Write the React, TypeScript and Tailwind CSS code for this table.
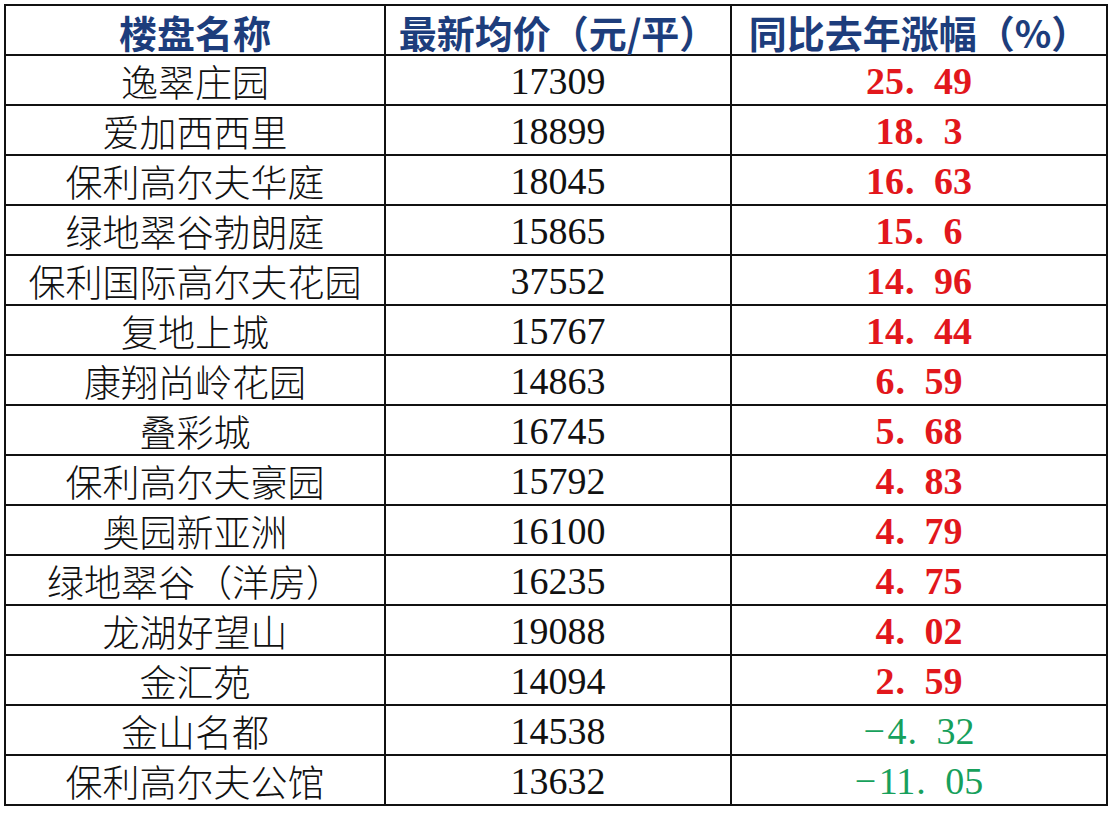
const rows: [string, string, string][] = [
  ['逸翠庄园', '17309', '25.49'],
  ['爱加西西里', '18899', '18.3'],
  ['保利高尔夫华庭', '18045', '16.63'],
  ['绿地翠谷勃朗庭', '15865', '15.6'],
  ['保利国际高尔夫花园', '37552', '14.96'],
  ['复地上城', '15767', '14.44'],
  ['康翔尚岭花园', '14863', '6.59'],
  ['叠彩城', '16745', '5.68'],
  ['保利高尔夫豪园', '15792', '4.83'],
  ['奥园新亚洲', '16100', '4.79'],
  ['绿地翠谷（洋房）', '16235', '4.75'],
  ['龙湖好望山', '19088', '4.02'],
  ['金汇苑', '14094', '2.59'],
  ['金山名都', '14538', '-4.32'],
  ['保利高尔夫公馆', '13632', '-11.05'],
]

const cjk = "font-['Noto_Sans_CJK_SC',sans-serif]"
const num = "font-['Liberation_Serif','Noto_Sans_CJK_SC',serif]"

function Rate({ value }: { value: string }) {
  const neg = value.startsWith('-')
  const [intPart, dec] = value.replace('-', '').split('.')
  return (
    <span
      className={`${num} text-[38px] leading-none whitespace-nowrap ${neg ? 'text-[#17a05c] font-normal' : 'text-[#e2171c] font-bold'}`}
    >
      {neg && <span className="inline-block w-[24px] text-left">−</span>}
      {intPart}
      <span className="inline-block w-[30px] pl-[1px] text-left">.</span>
      {dec}
    </span>
  )
}

export default function App() {
  return (
    <div className="w-[1114px] h-[814px] bg-white overflow-hidden pl-[4px] pt-[4px]">
      <div className="grid grid-cols-[380px_346px_376px] w-[1104px] border-l-2 border-t-2 border-[#111]">
        {['楼盘名称', '最新均价（元/平）', '同比去年涨幅（%）'].map((h) => (
          <div
            key={h}
            className={`h-[50px] border-r-2 border-b-2 border-[#111] flex items-center justify-center pt-[3px] ${cjk} text-[38px] font-bold text-[#1d3d7c] leading-none whitespace-nowrap`}
          >
            {h}
          </div>
        ))}
        {rows.map(([name, price, rate]) => (
          <div key={name} className="contents">
            <div
              className={`h-[50px] border-r-2 border-b-2 border-[#111] flex items-center justify-center pt-[2px] ${cjk} text-[37px] font-light text-[#111] leading-none whitespace-nowrap`}
            >
              {name}
            </div>
            <div
              className={`h-[50px] border-r-2 border-b-2 border-[#111] flex items-center justify-center pt-[2px] ${num} text-[38px] text-[#111] leading-none`}
            >
              {price}
            </div>
            <div className="h-[50px] border-r-2 border-b-2 border-[#111] flex items-center justify-center pt-[2px]">
              <Rate value={rate} />
            </div>
          </div>
        ))}
      </div>
    </div>
  )
}
